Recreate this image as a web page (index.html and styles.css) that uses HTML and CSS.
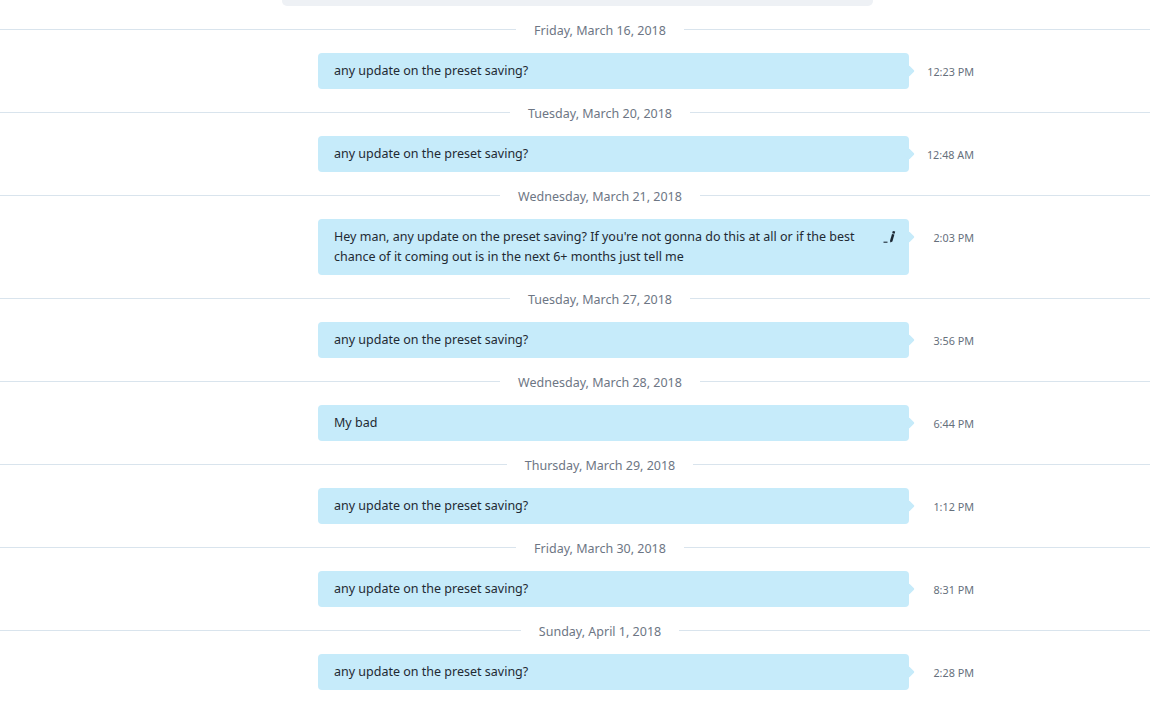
FILE: index.html
```html
<!DOCTYPE html>
<html>
<head>
<meta charset="utf-8">
<link rel="stylesheet" href="styles.css">
</head>
<body>
<div class="chat">
  <div class="topbar"></div>

  <div class="day"><span class="day-label">Friday, March 16, 2018</span></div>
  <div class="msg"><div class="bubble"><span class="text">any update on the preset saving?</span></div><div class="time">12:23 PM</div></div>

  <div class="day"><span class="day-label">Tuesday, March 20, 2018</span></div>
  <div class="msg"><div class="bubble"><span class="text">any update on the preset saving?</span></div><div class="time">12:48 AM</div></div>

  <div class="day"><span class="day-label">Wednesday, March 21, 2018</span></div>
  <div class="msg"><div class="bubble"><span class="text">Hey man, any update on the preset saving? If you're not gonna do this at all or if the best chance of it coming out is in the next 6+ months just tell me</span><svg class="edited" width="13" height="13" viewBox="0 0 13 13"><path d="M0.5 12.2h4" stroke="#1b2733" stroke-width="1.1"/><path d="M9.8 1 L12.2 1.6 L11.6 3.8 L9.2 3.2 Z" fill="#1b2733"/><path d="M9 4 L11.4 4.6 L9.4 11.4 L7.4 12.6 L7 10.8 Z" fill="#1b2733"/></svg></div><div class="time">2:03 PM</div></div>

  <div class="day"><span class="day-label">Tuesday, March 27, 2018</span></div>
  <div class="msg"><div class="bubble"><span class="text">any update on the preset saving?</span></div><div class="time">3:56 PM</div></div>

  <div class="day"><span class="day-label">Wednesday, March 28, 2018</span></div>
  <div class="msg"><div class="bubble"><span class="text">My bad</span></div><div class="time">6:44 PM</div></div>

  <div class="day"><span class="day-label">Thursday, March 29, 2018</span></div>
  <div class="msg"><div class="bubble"><span class="text">any update on the preset saving?</span></div><div class="time">1:12 PM</div></div>

  <div class="day"><span class="day-label">Friday, March 30, 2018</span></div>
  <div class="msg"><div class="bubble"><span class="text">any update on the preset saving?</span></div><div class="time">8:31 PM</div></div>

  <div class="day"><span class="day-label">Sunday, April 1, 2018</span></div>
  <div class="msg"><div class="bubble"><span class="text">any update on the preset saving?</span></div><div class="time">2:28 PM</div></div>
</div>
</body>
</html>
```
FILE: styles.css
```css
html, body {
  margin: 0;
  padding: 0;
  background: #ffffff;
  overflow: hidden;
}
body {
  font-family: "Noto Sans", "Open Sans", sans-serif;
  font-size: 12.5px;
  color: #1f2a33;
}
.chat {
  width: 1200px;
  display: flex;
  flex-direction: column;
}
.topbar {
  margin-left: 282px;
  width: 591px;
  height: 6px;
  background: #eef1f5;
  border-radius: 0 0 5px 5px;
}
.day {
  margin-top: 14px;
  height: 19px;
  display: flex;
  align-items: flex-start;
  gap: 18px;
  color: #6d7684;
  font-size: 12.5px;
  white-space: nowrap;
}
.day-label {
  padding-top: 2px;
  line-height: 17px;
}
.day::before, .day::after {
  content: "";
  flex: 1;
  height: 1px;
  margin-top: 9px;
  background: #d9e4ed;
}
.msg {
  margin-top: 14px;
  display: flex;
  align-items: flex-start;
  padding-left: 318px;
}
.bubble {
  position: relative;
  width: 591px;
  box-sizing: border-box;
  padding: 8px 13px 8px 16px;
  background: #c6ebfa;
  border-radius: 4px;
  line-height: 20px;
  display: flex;
  align-items: flex-start;
}
.bubble::after {
  content: "";
  position: absolute;
  right: -4px;
  top: 14px;
  width: 8px;
  height: 8px;
  background: #c6ebfa;
  transform: rotate(45deg);
  border-radius: 1px;
}
.text {
  flex: 1;
}
.edited {
  flex: none;
  margin-left: 14px;
  margin-top: 3px;
}
.time {
  width: 65px;
  text-align: right;
  font-size: 10.8px;
  line-height: 16px;
  padding-top: 11px;
  color: #66707c;
}
```
